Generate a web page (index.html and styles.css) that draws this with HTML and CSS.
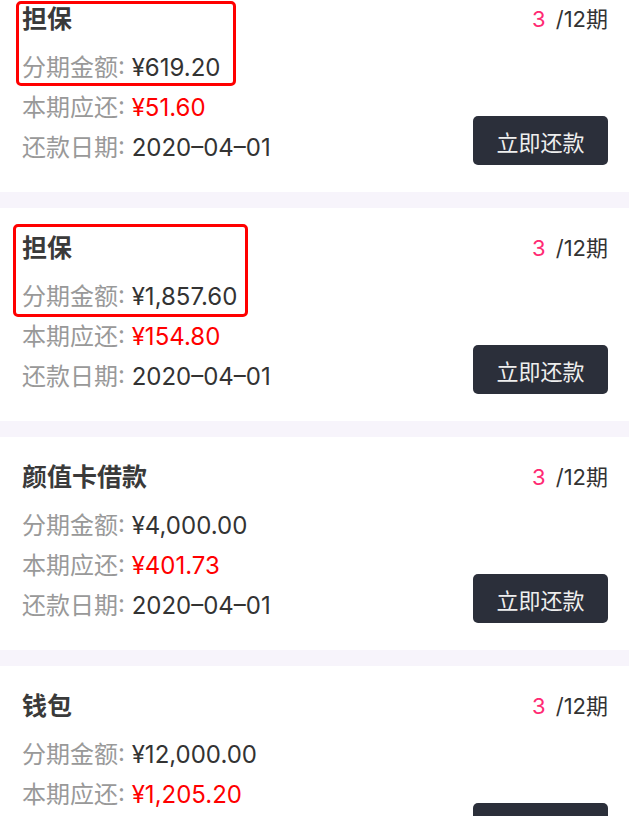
FILE: index.html
```html
<!DOCTYPE html>
<html lang="zh-CN">
<head>
  <meta charset="UTF-8">
  <meta name="viewport" content="width=device-width, initial-scale=1.0">
  <title>分期账单</title>
  <link rel="stylesheet" href="styles.css">
</head>
<body>
<div class="list">
  <div class="card">
    <div class="mark mark-a"></div>
    <div class="card-head">
      <span class="title">担保</span>
      <span class="term"><span class="cur">3</span> /12期</span>
    </div>
    <div class="card-body">
      <div class="rows">
        <div class="row">分期金额: <span class="val">¥619.20</span></div>
        <div class="row">本期应还: <span class="due">¥51.60</span></div>
        <div class="row">还款日期: <span class="val">2020–04–01</span></div>
      </div>
      <button class="pay">立即还款</button>
    </div>
  </div>

  <div class="card">
    <div class="mark mark-b"></div>
    <div class="card-head">
      <span class="title">担保</span>
      <span class="term"><span class="cur">3</span> /12期</span>
    </div>
    <div class="card-body">
      <div class="rows">
        <div class="row">分期金额: <span class="val">¥1,857.60</span></div>
        <div class="row">本期应还: <span class="due">¥154.80</span></div>
        <div class="row">还款日期: <span class="val">2020–04–01</span></div>
      </div>
      <button class="pay">立即还款</button>
    </div>
  </div>

  <div class="card">
    <div class="card-head">
      <span class="title">颜值卡借款</span>
      <span class="term"><span class="cur">3</span> /12期</span>
    </div>
    <div class="card-body">
      <div class="rows">
        <div class="row">分期金额: <span class="val">¥4,000.00</span></div>
        <div class="row">本期应还: <span class="due">¥401.73</span></div>
        <div class="row">还款日期: <span class="val">2020–04–01</span></div>
      </div>
      <button class="pay">立即还款</button>
    </div>
  </div>

  <div class="card">
    <div class="card-head">
      <span class="title">钱包</span>
      <span class="term"><span class="cur">3</span> /12期</span>
    </div>
    <div class="card-body">
      <div class="rows">
        <div class="row">分期金额: <span class="val">¥12,000.00</span></div>
        <div class="row">本期应还: <span class="due">¥1,205.20</span></div>
        <div class="row">还款日期: <span class="val">2020–04–01</span></div>
      </div>
      <button class="pay">立即还款</button>
    </div>
  </div>
</div>
</body>
</html>
```

FILE: styles.css
```css
body {
  margin: 0;
  background: #fff;
  font-family: Inter, "Noto Sans CJK SC", sans-serif;
  color: #333;
}
.list {
  width: 629px;
  margin-top: -21px;
  display: flex;
  flex-direction: column;
  gap: 16px;
  background: #f7f4fb;
}
.card {
  position: relative;
  background: #fff;
  padding: 20px 21px 24px 22px;
}
.card-head {
  display: flex;
  justify-content: space-between;
  align-items: center;
  height: 36px;
}
.title {
  font-size: 25px;
  font-weight: 600;
  color: #3a3a3a;
}
.term {
  font-size: 22px;
  color: #333;
}
.term .cur {
  color: #ff2a73;
  margin-right: 4px;
}
.card-body {
  display: flex;
  justify-content: space-between;
  align-items: flex-end;
  margin-top: 13px;
}
.row {
  font-size: 24px;
  line-height: 40px;
  color: #999;
}
.val {
  color: #333;
}
.due {
  color: #ff0000;
}
.pay {
  width: 135px;
  height: 49px;
  margin-bottom: 3px;
  border: none;
  border-radius: 5px;
  background: #2b2f3a;
  color: #eee;
  font-family: inherit;
  font-size: 22px;
  cursor: pointer;
}
.mark {
  position: absolute;
  box-sizing: border-box;
  border: 3px solid #ff0000;
  border-radius: 5px;
  pointer-events: none;
}
.mark-a {
  left: 16px;
  top: 22px;
  width: 220px;
  height: 85px;
}
.mark-b {
  left: 13px;
  top: 16px;
  width: 235px;
  height: 93px;
}
```
